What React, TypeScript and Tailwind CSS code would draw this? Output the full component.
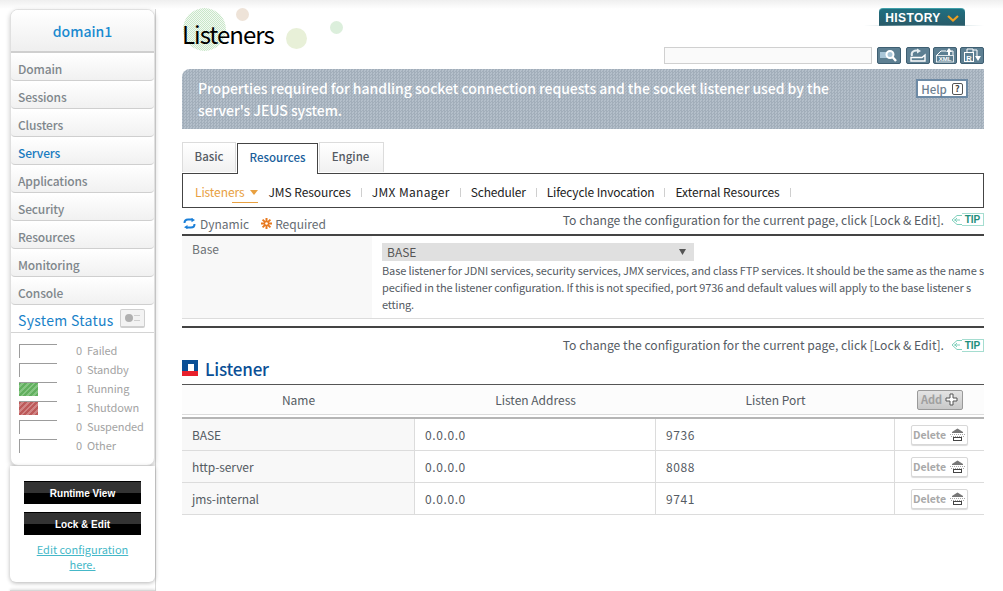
import React from "react";

const F = "font-['Noto_Sans_CJK_KR','Noto_Sans',sans-serif]";
const NAV = ["Domain", "Sessions", "Clusters", "Servers", "Applications", "Security", "Resources", "Monitoring", "Console"];
const STATUS: [string, number, string][] = [
  ["Failed", 0, ""],
  ["Standby", 0, ""],
  ["Running", 1, "green"],
  ["Shutdown", 1, "red"],
  ["Suspended", 0, ""],
  ["Other", 0, ""],
];
const SUB: [string, string][] = [
  ["JMS Resources", "tracking-[-0.05px]"],
  ["JMX Manager", "tracking-[0.35px]"],
  ["Scheduler", "tracking-[-0.2px]"],
  ["Lifecycle Invocation", "tracking-[-0.15px]"],
  ["External Resources", "tracking-[-0.05px]"],
];
const ROWS = [
  ["BASE", "0.0.0.0", "9736"],
  ["http-server", "0.0.0.0", "8088"],
  ["jms-internal", "0.0.0.0", "9741"],
];

function Tool({ children }: { children: React.ReactNode }) {
  return (
    <span className="w-[24px] h-[17px] bg-[#5d7f92] border border-[#3f5f72] rounded-[2px] flex items-center justify-center">
      {children}
    </span>
  );
}

function Tip() {
  return (
    <span className="flex items-center ml-[7px]">
      <svg width="11" height="12" viewBox="0 0 11 12">
        <path d="M11 1.5 L6 1.5 L1 6 L6 10.5 L11 10.5 M3 6 H9 M6 4 L4 6 L6 8" fill="none" stroke="#7fd0bc" strokeWidth="1" />
      </svg>
      <span className="w-[22px] h-[13px] border border-l-0 border-[#a5ddd0] text-[#1f8f7d] text-[10px] leading-[11px] font-bold text-center font-['Liberation_Sans',sans-serif]">
        TIP
      </span>
    </span>
  );
}

function Stack() {
  return (
    <svg width="17" height="14" viewBox="0 0 17 14" className="ml-[3px]">
      <path d="M8.5 0.5 L14 4 V5 H3 V4 Z" fill="#777" />
      <path d="M1 6.5h15M2 8.5h13" stroke="#a8a8a8" strokeWidth="1" strokeDasharray="1 1" />
      <rect x="4.5" y="9.5" width="8" height="3" fill="#fff" stroke="#444" />
    </svg>
  );
}

function ChangeTip() {
  return (
    <div className="flex items-center justify-end text-[12.15px] text-[#555b63]">
      <span>To change the configuration for the current page, click [Lock &amp; Edit].</span>
      <Tip />
    </div>
  );
}

export default function App() {
  return (
    <div className={`${F} relative w-[1003px] h-[591px] overflow-hidden bg-white flex`}>
      <div className="absolute top-0 left-0 right-0 h-[9px] bg-gradient-to-b from-[#efefef] to-white" />

      {/* sidebar */}
      <aside className="relative w-[146px] ml-[10px] mt-[9px] flex flex-col shrink-0 border-r border-[#d8d8d8]">
        <div className="shrink-0 rounded-[8px] bg-white border border-[#e0e0e0] shadow-[0_2px_5px_rgba(0,0,0,0.22)] overflow-hidden">
          <div className="h-[43px] bg-gradient-to-b from-white to-[#efefef] border-b-[2px] border-[#cfcfcf] flex items-center justify-center pt-[2px] text-[14px] font-medium text-[#1a8ad0]">
            domain1
          </div>
          {NAV.map((n) => (
            <div
              key={n}
              className={`h-[28px] pl-[7px] pt-[4px] flex items-center text-[12px] tracking-[-0.15px] font-medium bg-gradient-to-b from-white to-[#f1f1f1] border-b border-[#cfcfcf] rounded-b-[4px] ${
                n === "Servers" ? "text-[#1a7cc0]" : "text-[#7f878c]"
              }`}
            >
              {n}
            </div>
          ))}
          <div className="h-[28px] pl-[7px] pt-[3px] flex items-center border-b border-[#d4d4d4]">
            <span className="whitespace-nowrap text-[14px] text-[#1a82c8] tracking-[0.3px]">System Status</span>
            <span className="ml-[6px] -mt-[3px] w-[25px] h-[19px] border border-[#cfcfcf] border-b-[2px] rounded-[2px] bg-[#f3f3f3] flex items-center justify-center gap-[1px]">
              <span className="w-[8px] h-[8px] rounded-full bg-[#b0b0b0]" />
              <span className="w-[6px] h-[6px] border-y border-[#cfcfcf]" />
            </span>
          </div>
          <div className="pt-[8px] pb-[10px] pl-[8px]">
            {STATUS.map(([label, n, c]) => (
              <div key={label} className="h-[19px] flex items-center text-[11px] tracking-[-0.1px] text-[#a3a3a3]">
                <span className="w-[38px] h-[14px] border-t border-[#9c9c9c] relative">
                  <span className="absolute left-0 top-0 bottom-0 w-px bg-[#9c9c9c]" />
                  {c && (
                    <span
                      className={`absolute left-0 top-0 bottom-0 w-[19px] ${
                        c === "green"
                          ? "bg-[repeating-linear-gradient(135deg,#62b05f_0_2px,#86c583_2px_4px)]"
                          : "bg-[repeating-linear-gradient(135deg,#bd5a5a_0_2px,#d08585_2px_4px)]"
                      }`}
                    />
                  )}
                </span>
                <span className="w-[25px] text-right">{n}</span>
                <span className="ml-[5px]">{label}</span>
              </div>
            ))}
          </div>
        </div>
        <div className="shrink-0 h-[116px] rounded-b-[6px] bg-white shadow-[0_1px_4px_rgba(0,0,0,0.3)] flex flex-col items-center pt-[15px]">
          <button className="w-[117px] h-[23px] bg-[linear-gradient(#333_0_50%,#000_50%)] border-t border-black text-white text-[10px] font-bold font-['Liberation_Sans',sans-serif]">
            Runtime View
          </button>
          <button className="mt-[8px] w-[117px] h-[23px] bg-[linear-gradient(#333_0_50%,#000_50%)] border-t border-black text-white text-[10px] font-bold font-['Liberation_Sans',sans-serif]">
            Lock &amp; Edit
          </button>
          <a className="mt-[7px] w-[100px] text-center text-[11px] leading-[15px] text-[#45b8c8] underline">
            Edit configuration here.
          </a>
        </div>
        <div className="shrink-0 mt-[8px] h-[4px] border-t border-[#d8d8d8] shadow-[0_-1px_3px_rgba(0,0,0,0.12)]" />
      </aside>

      {/* main */}
      <main className="relative w-[802px] ml-[26px] flex flex-col">
        {/* decorative circles */}
        <span className="absolute left-[1px] top-[8px] w-[43px] h-[43px] rounded-full [background:repeating-conic-gradient(#c8e6c8_0_25%,#f2f9f2_0_50%)_0_0/2px_2px]" />
        <span className="absolute left-[54px] top-[8px] w-[13px] h-[13px] rounded-full bg-[#eee3d8]" />
        <span className="absolute left-[104px] top-[28px] w-[21px] h-[21px] rounded-full bg-[#e8f0d8]" />
        <span className="absolute left-[148px] top-[21px] w-[13px] h-[13px] rounded-full bg-[#dcefdc]" />
        <span className="absolute left-[697px] top-[8px] w-[86px] h-[18px] pt-px rounded-t-[4px] bg-[linear-gradient(#1f6f80,#2a5a68)] border-t border-[#3f9fa8] flex items-center justify-center gap-[6px] text-white text-[12px] font-bold tracking-[0.4px] font-['Liberation_Sans',sans-serif]">
          HISTORY
          <svg width="12" height="7" viewBox="0 0 12 7">
            <path d="M1 1 L6 5.5 L11 1" fill="none" stroke="#f0a020" strokeWidth="2.2" />
          </svg>
        </span>
        <span className="absolute left-[682px] top-[25px] w-[120px] h-px bg-[linear-gradient(90deg,transparent,#9bbcc2,transparent)]" />

        <div className="relative h-[69px] shrink-0">
          <h1 className="absolute left-0 top-[18px] text-[24px] leading-[32px] tracking-[-1px] text-black font-normal">Listeners</h1>
          <div className="absolute right-0 top-[47px] flex items-center">
            <span className="w-[208px] h-[17px] border border-[#d0d0d0] bg-[#fafafa] mr-[5px]" />
            <Tool>
              <svg width="20" height="15" viewBox="0 0 20 15">
                <rect x="1" y="4" width="9" height="6" fill="#a9c6d8" />
                <circle cx="11" cy="6.5" r="3.5" fill="#a9c6d8" stroke="#fff" strokeWidth="2" />
                <path d="M13.5 9 L17 13" stroke="#fff" strokeWidth="2.4" />
              </svg>
            </Tool>
            <span className="w-[5px]" />
            <Tool>
              <svg width="20" height="15" viewBox="0 0 20 15">
                <path d="M4 8 C2.5 3.5 7 1.5 11 3" fill="none" stroke="#e6edf1" strokeWidth="2" />
                <path d="M9 0.5 L13 3 L9 5.5 Z" fill="#e6edf1" />
                <path d="M3 9.5 H14 L17 7 V13 H3 Z" fill="#5d7f92" stroke="#fff" strokeWidth="1.4" />
              </svg>
            </Tool>
            <span className="w-[3px]" />
            <Tool>
              <svg width="20" height="15" viewBox="0 0 20 15">
                <path d="M2 7 L6 3 H11 M16 3 H18 V7" fill="none" stroke="#fff" strokeWidth="1" />
                <path d="M14 0 L17 4 H15 V7 H13 V4 H11 Z" fill="#fff" />
                <rect x="1.5" y="7.5" width="17" height="6.5" fill="none" stroke="#fff" strokeWidth="0.8" />
                <text x="10" y="13.2" fontSize="6" fontWeight="700" fill="#fff" textAnchor="middle" fontFamily="Liberation Sans">XML</text>
              </svg>
            </Tool>
            <span className="w-[3px]" />
            <Tool>
              <svg width="20" height="15" viewBox="0 0 20 15">
                <path d="M5 4 V1 H11 V4" fill="none" stroke="#fff" />
                <rect x="2.5" y="4.5" width="9" height="9" fill="none" stroke="#fff" />
                <text x="7" y="12.5" fontSize="7.5" fontWeight="700" fill="#fff" textAnchor="middle" fontFamily="Liberation Sans">R</text>
                <path d="M11 2 H15 V9" fill="none" stroke="#fff" />
                <path d="M13 8 H19 L16 13 Z" fill="#fff" />
              </svg>
            </Tool>
          </div>
        </div>

        {/* banner */}
        <div className="relative h-[60px] shrink-0 rounded-tl-[8px] [background:repeating-conic-gradient(#a2aeba_0_25%,#b4bfca_0_50%)_0_0/3px_3px] pl-[16px] pt-[8px] text-white text-[14px] leading-[22px] font-medium tracking-[-0.04px]">
          <p className="w-[640px]">
            Properties required for handling socket connection requests and the socket listener used by the server's JEUS system.
          </p>
          <span className="absolute right-[16px] top-[10px] w-[52px] h-[19px] bg-white border-[2px] border-[#6d8aa5] flex items-center justify-center gap-[5px] text-[11.5px] text-[#6d8090]">
            Help
            <span className="w-[11px] h-[12px] border border-[#555] rounded-[2px] text-[9px] leading-[10px] text-center text-[#444] font-bold">?</span>
          </span>
        </div>

        {/* tabs */}
        <div className="flex items-end mt-[14px] h-[30px] shrink-0 relative z-10 text-[11.5px] font-medium">
          <span className="w-[54px] h-[30px] mb-[1px] pb-[2px] border border-b-0 border-[#dcdcdc] bg-gradient-to-b from-white to-[#f1f1f1] flex items-center justify-center text-[#555b63]">Basic</span>
          <span className="w-[81px] h-[31px] ml-px pb-[2px] border border-b-0 border-[#444] bg-white flex items-center justify-center text-[#1a5f9c] -mb-px">Resources</span>
          <span className="w-[65px] h-[30px] ml-px mb-[1px] pb-[2px] pr-[2px] border border-b-0 border-[#dcdcdc] bg-gradient-to-b from-white to-[#f1f1f1] flex items-center justify-center text-[#555b63]">Engine</span>
        </div>
        <div className="h-[35px] shrink-0 border border-[#444] flex items-center pl-[12px] pt-[3px] text-[12px] text-[#222]">
          <span className="relative flex items-center text-[#e8a040] mr-[10px] tracking-[-0.1px]">
            Listeners
            <svg width="8" height="5" viewBox="0 0 8 5" className="ml-[6px]"><path d="M0 0 H8 L4 5 Z" fill="#e8a040" /></svg>
            <span className="absolute left-[37px] right-0 -bottom-[2px] h-px bg-[#e8a040]" />
          </span>
          {SUB.map(([s, t]) => (
            <React.Fragment key={s}>
              <span className={t}>{s}</span>
              <span className="w-px h-[9px] bg-[#cfcfcf] mx-[10px]" />
            </React.Fragment>
          ))}
        </div>

        {/* legend */}
        <div className="h-[26px] shrink-0 flex items-center justify-between text-[12px]">
          <div className="flex items-center text-[#666c72] mt-[5px]">
            <svg width="13" height="11" viewBox="0 0 13 11" className="ml-[1px] mr-[4px]">
              <path d="M1.5 5 C1.5 2.5 3 1.5 5 1.5 H10" fill="none" stroke="#1a7fd8" strokeWidth="2" />
              <path d="M8.5 0 L12 2 L8.5 4.2 Z" fill="#1a7fd8" />
              <path d="M11.5 6 C11.5 8.5 10 9.5 8 9.5 H3" fill="none" stroke="#1a7fd8" strokeWidth="2" />
              <path d="M4.5 7 L1 9.2 L4.5 11 Z" fill="#1a7fd8" />
            </svg>
            Dynamic
            <svg width="11" height="11" viewBox="0 0 11 11" className="ml-[12px] mr-[3px]">
              <g stroke="#e87a20" strokeWidth="2">
                <path d="M5.5 0 V11 M0 5.5 H11 M1.6 1.6 L9.4 9.4 M9.4 1.6 L1.6 9.4" />
              </g>
              <circle cx="5.5" cy="5.5" r="1.3" fill="#fff" />
            </svg>
            Required
          </div>
          <div className="-mt-[2px]"><ChangeTip /></div>
        </div>
        <div className="h-[2px] shrink-0 bg-[#444]" />

        {/* form */}
        <div className="flex h-[83px] shrink-0 border-b border-[#dcdcdc]">
          <div className="w-[190px] shrink-0 bg-[#f8f8f8] pl-[10px] pt-[4px] text-[12px] text-[#6b7075]">Base</div>
          <div className="flex-1 min-w-0 pl-[10px] pt-[7px]">
            <div className="w-[312px] h-[18px] bg-[#e0e0e0] flex items-center justify-between px-[5px] text-[12px] text-[#555]">
              BASE
              <svg width="7" height="6" viewBox="0 0 7 6" className="mr-[3px]"><path d="M0 0 H7 L3.5 6 Z" fill="#555" /></svg>
            </div>
            <p className="mt-[1px] text-[11px] tracking-[-0.14px] leading-[17px] text-[#555b63] whitespace-nowrap">
              Base listener for JDNI services, security services, JMX services, and class FTP services. It should be the same as the name s<br />
              pecified in the listener configuration. If this is not specified, port 9736 and default values will apply to the base listener s<br />
              etting.
            </p>
          </div>
        </div>
        <div className="h-[2px] mt-[7px] shrink-0 bg-[#444]" />
        <div className="mt-[8px] shrink-0"><ChangeTip /></div>

        {/* listener heading */}
        <div className="flex items-center mt-[2px] h-[24px] shrink-0">
          <span className="relative w-[16px] h-[16px] bg-[linear-gradient(#0a4f96_0_66%,#e8202c_66%)] mr-[7px]">
            <span className="absolute left-[6px] top-[4px] w-[6px] h-[7px] bg-white" />
          </span>
          <h2 className="text-[17px] pt-[2px] font-medium text-[#0a4f96] tracking-[-0.2px]">Listener</h2>
        </div>

        {/* table */}
        <div className="mt-[4px] h-px shrink-0 bg-[#555]" />
        <div className="flex h-[30px] shrink-0 items-center bg-[#fcfcfc] border-b border-[#dcdcdc] text-[12px] text-[#555b63]">
          <span className="w-[233px] text-center">Name</span>
          <span className="w-[241px] text-center">Listen Address</span>
          <span className="w-[239px] text-center">Listen Port</span>
          <span className="w-[89px] flex justify-center">
            <span className="w-[46px] h-[20px] border border-[#9a9a9a] rounded-[2px] bg-gradient-to-b from-[#e4e4e4] to-[#c8c8c8] flex items-center justify-center text-[11px] font-bold text-[#a0a0a0]">
              Add
              <svg width="13" height="13" viewBox="0 0 13 13" className="ml-[3px]">
                <path d="M5 1 H8 V5 H12 V8 H8 V12 H5 V8 H1 V5 H5 Z" fill="#fff" stroke="#555" />
              </svg>
            </span>
          </span>
        </div>
        <div className="h-[2px] mt-[2px] shrink-0 bg-[#b5b5b5]" />
        {ROWS.map((r) => (
          <div key={r[0]} className="flex h-[32px] shrink-0 border-b border-[#dcdcdc] text-[12px] text-[#555b63]">
            <span className="w-[233px] bg-[#f8f8f8] border-r border-[#dcdcdc] pl-[10px] flex items-center tracking-[-0.1px]">{r[0]}</span>
            <span className="w-[241px] border-r border-[#dcdcdc] pl-[10px] flex items-center tracking-[0.6px]">{r[1]}</span>
            <span className="w-[239px] border-r border-[#dcdcdc] pl-[10px] flex items-center tracking-[0.6px]">{r[2]}</span>
            <span className="w-[89px] flex items-center justify-center">
              <span className="w-[57px] h-[20px] border border-[#d8d8d8] rounded-[2px] shadow-[0_1px_1px_rgba(0,0,0,0.15)] bg-white flex items-center justify-center text-[10.5px] font-bold text-[#a8a8a8]">
                Delete
                <Stack />
              </span>
            </span>
          </div>
        ))}
      </main>
    </div>
  );
}
